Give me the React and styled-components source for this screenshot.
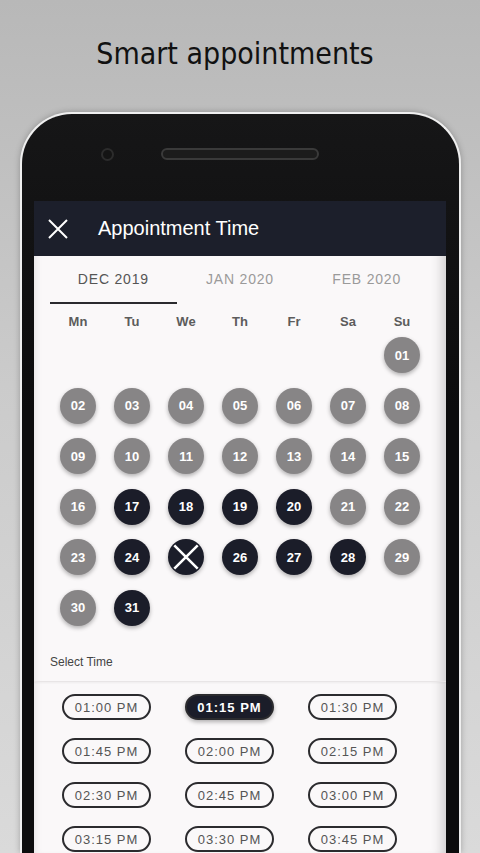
import React from "react";
import styled, { createGlobalStyle, css } from "styled-components";

const GlobalStyle = createGlobalStyle`
  body {
    margin: 0;
    font-family: "Liberation Sans", Arial, sans-serif;
  }
`;

const Page = styled.div`
  height: 853px;
  overflow: hidden;
  display: flex;
  flex-direction: column;
  background: linear-gradient(180deg, #b8b8b8 0%, #cbcbcb 45%, #dadada 100%);
`;

const Heading = styled.h1`
  margin: 0;
  padding: 36px 10px 0 0;
  font-family: "DejaVu Sans Condensed", "DejaVu Sans", sans-serif;
  font-weight: normal;
  font-size: 30px;
  line-height: 36px;
  color: #111;
  text-align: center;
`;

const Phone = styled.div`
  margin: 40px 0 0 20px;
  width: 441px;
  flex: 1;
  box-sizing: border-box;
  display: flex;
  flex-direction: column;
  padding: 0 13px 0 12px;
  background: linear-gradient(180deg, #161617 0%, #0c0c0d 40%);
  border: 2px solid #efefef;
  border-bottom: none;
  border-radius: 52px 52px 0 0;
  box-shadow: 0 0 6px rgba(0, 0, 0, 0.25);
`;

const TopBar = styled.div`
  height: 87px;
  box-sizing: border-box;
  padding: 0 0 7px 67px;
  display: flex;
  align-items: center;
`;

const Camera = styled.div`
  width: 9px;
  height: 9px;
  border-radius: 50%;
  background: #141414;
  border: 2px solid #2c2c2c;
`;

const Speaker = styled.div`
  margin-left: 47px;
  width: 158px;
  height: 12px;
  box-sizing: border-box;
  border-radius: 6px;
  background: #1c1c1c;
  border: 2px solid #3a3a3a;
`;

const Screen = styled.div`
  flex: 1;
  display: flex;
  flex-direction: column;
  background: #faf8f9;
  overflow: hidden;
  box-shadow: inset -14px 0 12px -10px rgba(0, 0, 0, 0.18),
    inset 6px 0 8px -6px rgba(0, 0, 0, 0.12);
`;

const Header = styled.div`
  height: 55px;
  flex-shrink: 0;
  display: flex;
  align-items: center;
  gap: 30px;
  padding-left: 14px;
  background: #1c1f2b;
  color: #fff;
  font-size: 20px;
`;

const Tabs = styled.div`
  display: flex;
  padding: 0 16px;
`;

const Tab = styled.div`
  flex: 1;
  height: 46px;
  display: flex;
  align-items: center;
  justify-content: center;
  font-size: 14px;
  letter-spacing: 0.8px;
  color: ${(p) => (p.active ? "#555" : "#9a9a9a")};
  border-bottom: 2px solid ${(p) => (p.active ? "#2a2a2e" : "transparent")};
`;

const Weekdays = styled.div`
  display: grid;
  grid-template-columns: repeat(7, 54px);
  padding: 10px 17px 0;
  line-height: 16px;
  font-size: 13px;
  font-weight: bold;
  color: #5c5c5c;
  text-align: center;
`;

const Days = styled.div`
  display: grid;
  grid-template-columns: repeat(7, 54px);
  grid-auto-rows: 50.5px;
  padding: 0 17px;
  justify-items: center;
  align-items: center;
`;

const Day = styled.div`
  width: 36px;
  height: 36px;
  border-radius: 50%;
  display: flex;
  align-items: center;
  justify-content: center;
  font-size: 13px;
  font-weight: bold;
  color: #fff;
  background: ${(p) => (p.booked ? "#1b1d29" : "#878586")};
  box-shadow: 0 2px 4px rgba(0, 0, 0, 0.3);
  ${(p) =>
    p.start &&
    css`
      grid-column-start: ${p.start};
    `}
`;

const SectionLabel = styled.div`
  padding: 22px 0 11px 16px;
  font-size: 12px;
  line-height: 15px;
  color: #444;
  border-bottom: 1px solid #e8e5e6;
  box-shadow: 0 1px 2px rgba(0, 0, 0, 0.05);
`;

const Times = styled.div`
  display: grid;
  grid-template-columns: repeat(3, 123px);
  row-gap: 18px;
  padding: 12px 0 0 11px;
  justify-items: center;
`;

const Chip = styled.div`
  width: 89px;
  height: 26px;
  box-sizing: border-box;
  border-radius: 13px;
  display: flex;
  align-items: center;
  justify-content: center;
  font-size: 13px;
  letter-spacing: 1px;
  border: 2px solid #2b2b2e;
  color: ${(p) => (p.active ? "#fff" : "#555")};
  background: ${(p) => (p.active ? "#1b1d29" : "transparent")};
  font-weight: ${(p) => (p.active ? "bold" : "normal")};
  box-shadow: ${(p) => (p.active ? "0 2px 4px rgba(0,0,0,0.3)" : "none")};
`;

const Cross = ({ size = 20, width = 2 }) => (
  <svg width={size} height={size} viewBox="0 0 20 20">
    <path d="M1 1 L19 19 M19 1 L1 19" stroke="#fff" strokeWidth={width} fill="none" />
  </svg>
);

const booked = [17, 18, 19, 20, 24, 25, 26, 27, 28, 31];
const times = [
  "01:00 PM", "01:15 PM", "01:30 PM",
  "01:45 PM", "02:00 PM", "02:15 PM",
  "02:30 PM", "02:45 PM", "03:00 PM",
  "03:15 PM", "03:30 PM", "03:45 PM",
];

export default function App() {
  const days = Array.from({ length: 31 }, (_, i) => i + 1);
  return (
    <>
      <GlobalStyle />
      <Page>
        <Heading>Smart appointments</Heading>
        <Phone>
          <TopBar>
            <Camera />
            <Speaker />
          </TopBar>
          <Screen>
            <Header>
              <Cross size={20} width={2} />
              <span>Appointment Time</span>
            </Header>
            <Tabs>
              <Tab active>DEC 2019</Tab>
              <Tab>JAN 2020</Tab>
              <Tab>FEB 2020</Tab>
            </Tabs>
            <Weekdays>
              {["Mn", "Tu", "We", "Th", "Fr", "Sa", "Su"].map((d) => (
                <span key={d}>{d}</span>
              ))}
            </Weekdays>
            <Days>
              {days.map((d) => (
                <Day key={d} booked={booked.includes(d)} start={d === 1 ? 7 : undefined}>
                  {d === 25 ? <Cross size={26} width={2} /> : String(d).padStart(2, "0")}
                </Day>
              ))}
            </Days>
            <SectionLabel>Select Time</SectionLabel>
            <Times>
              {times.map((t) => (
                <Chip key={t} active={t === "01:15 PM"}>
                  {t}
                </Chip>
              ))}
            </Times>
          </Screen>
        </Phone>
      </Page>
    </>
  );
}
